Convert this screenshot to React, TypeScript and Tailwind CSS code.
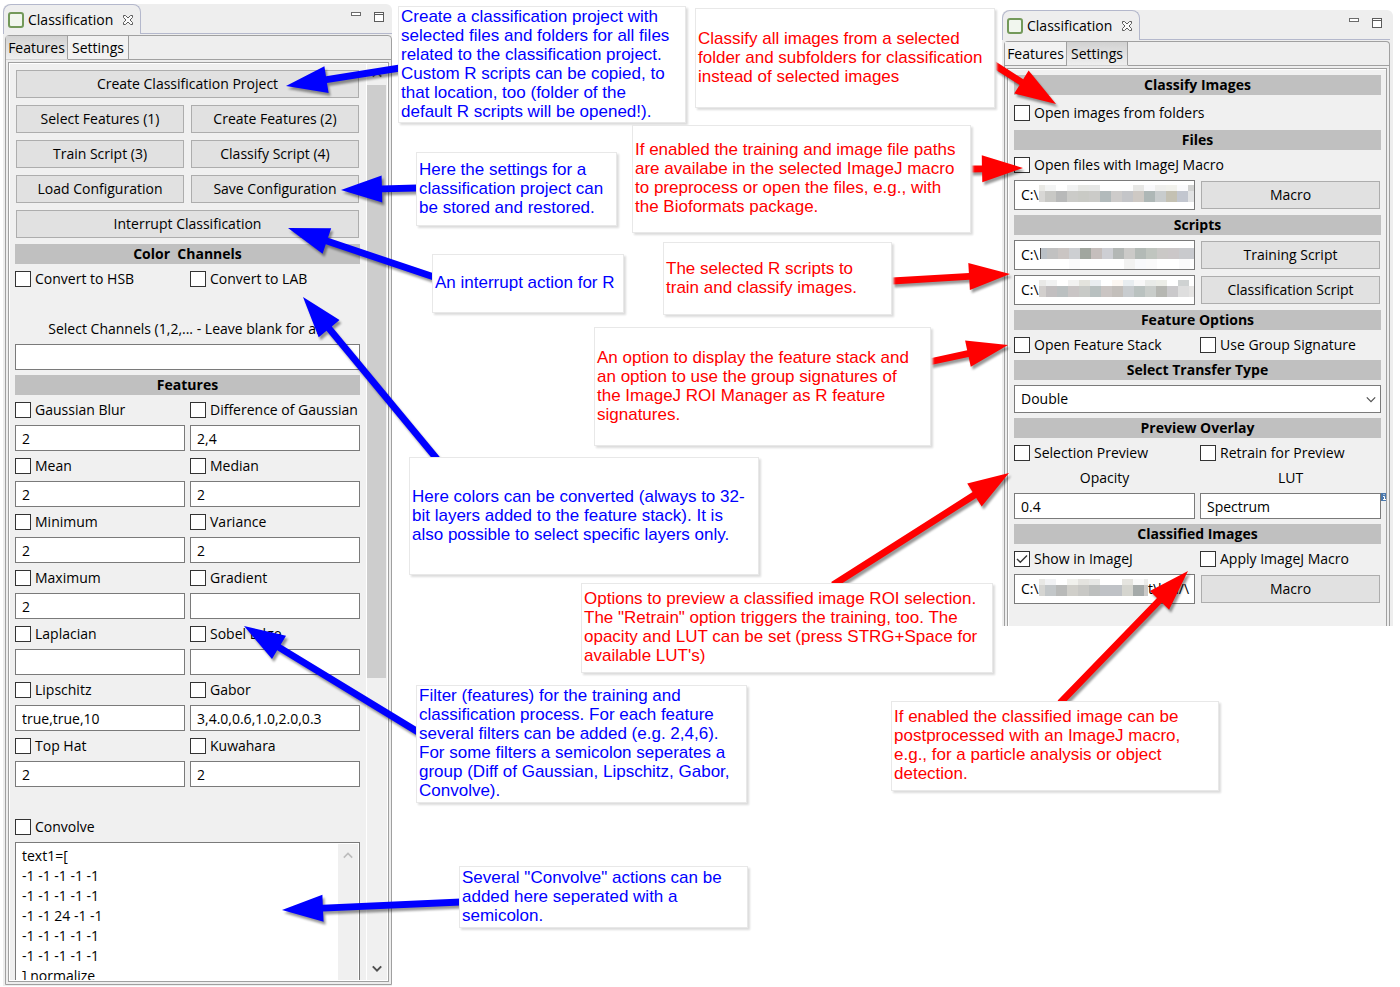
import React, { useState } from "react";

type Cell = [width: number, color: string];
type MosaicRow = { y: number; h: number; cells: Cell[] };

function CloseIcon() {
  return (
    <svg width="12" height="12" viewBox="0 0 12 12" fill="#fbfbfb" stroke="#5c5c5c" strokeWidth="1" aria-hidden="true">
      <path d="M1.5 1.5 H3.5 L6 4 L8.5 1.5 H10.5 V3.5 L8 6 L10.5 8.5 V10.5 H8.5 L6 8 L3.5 10.5 H1.5 V8.5 L4 6 L1.5 3.5 Z" />
    </svg>
  );
}

function MinimizeIcon() {
  return (
    <svg width="10" height="4" viewBox="0 0 10 4" aria-hidden="true">
      <rect x="0.5" y="0.5" width="9" height="3" fill="#fff" stroke="#6b6b6b" />
    </svg>
  );
}

function MaximizeIcon() {
  return (
    <svg width="10" height="10" viewBox="0 0 10 10" aria-hidden="true">
      <rect x="0.5" y="0.5" width="9" height="9" fill="#fff" stroke="#5c5c5c" />
      <path d="M0 2.5 H10" stroke="#5c5c5c" />
    </svg>
  );
}

function Chevron({ up = false, color, stroke = 1.6 }: { up?: boolean; color: string; stroke?: number }) {
  return (
    <svg width="10" height="7" viewBox="0 0 10 7" fill="none" stroke={color} strokeWidth={stroke} aria-hidden="true">
      <path d={up ? "M0.8 5.6 L5 1.4 L9.2 5.6" : "M0.8 1.4 L5 5.6 L9.2 1.4"} />
    </svg>
  );
}

function Window({
  active,
  bottomEdge,
  className,
  children,
}: {
  active: "Features" | "Settings";
  bottomEdge: boolean;
  className: string;
  children: React.ReactNode;
}) {
  const selected = "bg-linear-to-b from-[#d2d2d2] to-[#efefef] border-b-transparent";
  const idle = "bg-[#f2f2f2] border-b-[#a0a0a0]";
  return (
    <section className={"flex flex-col bg-[#eeeeee] rounded-t-md " + className}>
      <header className="flex h-[30px] shrink-0 items-stretch">
        <div className="flex w-[138px] items-center gap-1 rounded-t-lg border border-b-0 border-[#b4b8cc] pl-1">
          <span className="size-4 rounded-[3px] border-2 border-[#73995a] bg-[#f1f6ee]" />
          <span className="w-[90px]">Classification</span>
          <button type="button" aria-label="Close" className="flex">
            <CloseIcon />
          </button>
        </div>
        <div className="flex flex-1 items-start justify-end gap-[13px] border-b border-[#b4b8cc] pr-2 pt-2">
          <button type="button" aria-label="Minimize" className="flex">
            <MinimizeIcon />
          </button>
          <button type="button" aria-label="Maximize" className="flex">
            <MaximizeIcon />
          </button>
        </div>
      </header>
      <div
        className={
          "mt-px ml-[2px] flex min-h-0 flex-1 flex-col rounded-t border border-[#a0a0a0] " +
          (bottomEdge ? "mb-px" : "border-b-0")
        }
      >
        <nav className="flex h-6 shrink-0" role="tablist">
          <button
            type="button"
            role="tab"
            aria-selected={active === "Features"}
            className={"w-[62px] border-r border-b border-r-[#a0a0a0] " + (active === "Features" ? selected : idle)}
          >
            Features
          </button>
          <button
            type="button"
            role="tab"
            aria-selected={active === "Settings"}
            className={"w-[61px] border-r border-b border-r-[#a0a0a0] " + (active === "Settings" ? selected : idle)}
          >
            Settings
          </button>
          <div className="flex-1 border-b border-[#a0a0a0]" />
        </nav>
        <div
          className={
            "mx-[2px] mt-[2px] flex min-h-0 flex-1 border border-[#a0a0a0] bg-white pt-px pl-px " +
            (bottomEdge ? "mb-[2px] pb-px pr-px" : "border-b-0")
          }
        >
          {children}
        </div>
      </div>
    </section>
  );
}

function Bar({ children }: { children: React.ReactNode }) {
  return <h2 className="col-span-2 h-5 whitespace-pre bg-[#c0c0c0] text-center font-bold">{children}</h2>;
}

function PushButton({ children, wide = false }: { children: React.ReactNode; wide?: boolean }) {
  return (
    <button
      type="button"
      className={
        "m-px h-7 self-center border border-[#adadad] bg-[#e1e1e1] text-center " + (wide ? "col-span-2" : "")
      }
    >
      {children}
    </button>
  );
}

function Check({
  label,
  initial = false,
  className = "h-5",
}: {
  label: string;
  initial?: boolean;
  className?: string;
}) {
  const [on, setOn] = useState(initial);
  return (
    <label className={"flex items-center gap-1 whitespace-nowrap " + className}>
      <span className="grid size-4 shrink-0">
        <input
          type="checkbox"
          checked={on}
          onChange={(e) => setOn(e.target.checked)}
          className="col-start-1 row-start-1 size-4 appearance-none border border-[#333333] bg-white"
        />
        {on && (
          <svg
            viewBox="0 0 16 16"
            className="pointer-events-none col-start-1 row-start-1 size-4"
            fill="none"
            stroke="#333"
            strokeWidth="1.4"
            aria-hidden="true"
          >
            <path d="M3 8 L6.3 11.3 L13 4.5" />
          </svg>
        )}
      </span>
      <span>{label}</span>
    </label>
  );
}

function Field({ label, value, wide = false }: { label: string; value: string; wide?: boolean }) {
  return (
    <input
      type="text"
      aria-label={label}
      defaultValue={value}
      className={
        "h-[26px] w-full min-w-0 border border-[#7a7a7a] bg-white px-[6px] " + (wide ? "col-span-2" : "")
      }
    />
  );
}

function Mosaic({ width, rows }: { width: number; rows: MosaicRow[] }) {
  return (
    <svg width={width} height="28" viewBox={`0 0 ${width} 28`} className="shrink-0" shapeRendering="crispEdges" aria-hidden="true">
      {rows.map((row, r) => {
        let x = 0;
        return row.cells.map(([w, color], i) => {
          const cell = <rect key={`${r}-${i}`} x={x} y={row.y} width={w} height={row.h} fill={color} />;
          x += w;
          return cell;
        });
      })}
    </svg>
  );
}

function PathField({
  label,
  width,
  rows,
  tail,
}: {
  label: string;
  width: number;
  rows: MosaicRow[];
  tail?: string;
}) {
  return (
    <div className="flex h-[30px] min-w-0 items-start overflow-hidden border border-[#7a7a7a] bg-white">
      <input type="text" aria-label={label} defaultValue={"C:\\"} className="h-[26px] w-6 shrink-0 pl-[6px]" />
      <Mosaic width={width} rows={rows} />
      {tail && (
        <input type="text" aria-label={label + " ending"} defaultValue={tail} className="h-[26px] w-11 min-w-0" />
      )}
    </div>
  );
}

const macroPath: MosaicRow[] = [
  {
    y: 4,
    h: 6,
    cells: [[6, "#e9e9e5"], [11, "#f3f4f4"], [11, "#ffffff"], [11, "#f1f2f2"], [11, "#e6e7e4"], [11, "#e6e7e6"], [11, "#fdfdfd"], [11, "#fdfdfd"], [11, "#fdfdfd"], [11, "#e7e7e5"], [11, "#f9f9fb"], [11, "#efefed"], [11, "#f1f1ec"], [11, "#fafafc"], [11, "#d1d2d1"]],
  },
  {
    y: 10,
    h: 11,
    cells: [[6, "#d8d7d5"], [11, "#c8c8c5"], [11, "#b8b9b9"], [11, "#cbcbc8"], [11, "#c9cac5"], [11, "#cbcbc8"], [11, "#b2babb"], [11, "#cdcbca"], [11, "#c4c5c8"], [11, "#cec9c4"], [11, "#aeb7b6"], [11, "#c8cccd"], [11, "#c4c1b3"], [11, "#c2c6cf"], [11, "#e2e3e4"], [4, "#d9d9d9"]],
  },
];

const trainingPath: MosaicRow[] = [
  {
    y: 7,
    h: 11,
    cells: [[1, "#ffffff"], [1, "#4a4545"], [6, "#bac0c6"], [11, "#c1c1c1"], [11, "#cac5c3"], [11, "#cdcfd2"], [11, "#a1a69f"], [11, "#c5bebc"], [11, "#cdced3"], [11, "#b3b7b5"], [11, "#cbcac8"], [11, "#b3bab6"], [11, "#c0c5bf"], [11, "#cac8c6"], [11, "#cbc7c8"], [11, "#c9cacd"], [9, "#c8cacf"]],
  },
  {
    y: 18,
    h: 10,
    cells: [[30, "#ffffff"], [11, "#fafafb"], [44, "#ffffff"], [11, "#f2f2f1"], [11, "#f8f9fb"], [11, "#fafafa"], [22, "#ffffff"], [11, "#fafafb"]],
  },
];

const classifyPath: MosaicRow[] = [
  {
    y: 4,
    h: 6,
    cells: [[7, "#e9e9e7"], [11, "#f1f2f2"], [11, "#ffffff"], [11, "#f2f2f1"], [11, "#e3e3dd"], [11, "#e9edf0"], [11, "#ffffff"], [11, "#fcf7f2"], [11, "#e8edf0"], [11, "#f8f8f8"], [11, "#e9ebe8"], [11, "#ecede7"], [11, "#ffffff"], [11, "#cfd2d2"]],
  },
  {
    y: 10,
    h: 11,
    cells: [[7, "#d2cfcd"], [11, "#c2bfc0"], [11, "#bbc0c1"], [11, "#c9c5c5"], [11, "#c8cac7"], [11, "#b8c0c0"], [11, "#cac5c3"], [11, "#c3bfbb"], [11, "#c8cccf"], [11, "#bac2c0"], [11, "#c9cdca"], [11, "#b6b7b2"], [11, "#cac9cb"], [11, "#dedede"], [5, "#e5e4e3"]],
  },
];

const outputPath: MosaicRow[] = [
  {
    y: 4,
    h: 6,
    cells: [[6, "#e8e8e5"], [11, "#f1f2f4"], [11, "#ffffff"], [11, "#f1f1ed"], [11, "#e4e3df"], [11, "#e7e7e5"], [11, "#fefefe"], [11, "#fefefe"], [11, "#e5e4df"], [11, "#f9f9f9"], [4, "#ececea"]],
  },
  {
    y: 10,
    h: 11,
    cells: [[6, "#d5d5d2"], [11, "#c3c7c9"], [11, "#b9bab9"], [11, "#d0cfca"], [11, "#c8c8c5"], [11, "#bdbfbe"], [11, "#bfc2c6"], [11, "#bfc2c6"], [11, "#d5d5cf"], [11, "#a5aaa9"], [4, "#cbcac8"]],
  },
];

const features: [string, string][] = [
  ["Gaussian Blur", "2"],
  ["Difference of Gaussian", "2,4"],
  ["Mean", "2"],
  ["Median", "2"],
  ["Minimum", "2"],
  ["Variance", "2"],
  ["Maximum", "2"],
  ["Gradient", ""],
  ["Laplacian", ""],
  ["Sobel Edge", ""],
  ["Lipschitz", "true,true,10"],
  ["Gabor", "3,4.0,0.6,1.0,2.0,0.3"],
  ["Top Hat", "2"],
  ["Kuwahara", "2"],
];

const kernel = `text1=[
-1 -1 -1 -1 -1
-1 -1 -1 -1 -1
-1 -1 24 -1 -1
-1 -1 -1 -1 -1
-1 -1 -1 -1 -1
] normalize`;

function FeaturesPanel() {
  return (
    <>
      <div className="min-h-0 flex-1 overflow-hidden bg-[#f0f0f0] pt-[5px] pr-[6px] pl-[5px]">
        <div className="grid grid-cols-2 gap-[5px]">
          <PushButton wide>Create Classification Project</PushButton>
          <PushButton>Select Features (1)</PushButton>
          <PushButton>Create Features (2)</PushButton>
          <PushButton>Train Script (3)</PushButton>
          <PushButton>Classify Script (4)</PushButton>
          <PushButton>Load Configuration</PushButton>
          <PushButton>Save Configuration</PushButton>
          <PushButton wide>Interrupt Classification</PushButton>
          <Bar>{"Color  Channels"}</Bar>
          <Check label="Convert to HSB" />
          <Check label="Convert to LAB" />
          <div className="col-span-2 h-5" />
          <p className="col-span-2 h-5 whitespace-pre text-center">{"Select Channels (1,2,... - Leave blank for all "}</p>
          <Field label="Select Channels" value="" wide />
          <Bar>Features</Bar>
          {features.map(([name, value], i) => {
            // Each pair of features shares a row of check boxes and a row of values.
            if (i % 2 === 1) return null;
            const [rightName, rightValue] = features[i + 1];
            return (
              <React.Fragment key={name}>
                <Check label={name} />
                <Check label={rightName} />
                <Field label={name} value={value} />
                <Field label={rightName} value={rightValue} />
              </React.Fragment>
            );
          })}
          <div className="col-span-2 h-5" />
          <div className="col-span-2">
            <Check label="Convolve" />
          </div>
          <div className="col-span-2 flex border border-[#7a7a7a] bg-white p-px">
            <textarea
              aria-label="Convolve"
              defaultValue={kernel}
              className="h-[160px] min-w-0 flex-1 resize-none overflow-hidden px-[5px] pt-[2px] leading-5"
            />
            <div className="flex w-5 justify-center bg-[#f0f0f0] pt-2">
              <Chevron up color="#bdbdbd" />
            </div>
          </div>
        </div>
      </div>
      <div className="ml-px flex w-5 shrink-0 flex-col items-center bg-[#f0f0f0] pr-px">
        <div className="flex h-[21px] items-center">
          <Chevron up color="#606060" stroke={2} />
        </div>
        <div className="h-[593px] w-full shrink bg-[#cdcdcd]" />
        <div className="flex flex-1 items-end pb-2">
          <Chevron color="#505050" stroke={2} />
        </div>
      </div>
    </>
  );
}

function SettingsPanel() {
  return (
    <div className="flex-1 bg-[#f0f0f0] px-[5px] pt-[5px] pb-[22px]">
      <div className="grid grid-cols-2 gap-[5px]">
        <Bar>Classify Images</Bar>
        <Check label="Open images from folders" className="col-span-2 h-[25px]" />
        <Bar>Files</Bar>
        <Check label="Open files with ImageJ Macro" className="col-span-2 h-5" />
        <PathField label="Macro path" width={155} rows={macroPath} />
        <PushButton>Macro</PushButton>
        <Bar>Scripts</Bar>
        <PathField label="Training script path" width={155} rows={trainingPath} />
        <PushButton>Training Script</PushButton>
        <PathField label="Classification script path" width={155} rows={classifyPath} />
        <PushButton>Classification Script</PushButton>
        <Bar>Feature Options</Bar>
        <Check label="Open Feature Stack" />
        <Check label="Use Group Signature" />
        <Bar>Select Transfer Type</Bar>
        <div className="col-span-2 grid">
          <select
            aria-label="Select Transfer Type"
            defaultValue="Double"
            className="col-start-1 row-start-1 h-7 w-full appearance-none border border-[#7a7a7a] bg-white px-[6px]"
          >
            <option>Double</option>
          </select>
          <span className="pointer-events-none col-start-1 row-start-1 self-center justify-self-end pr-[5px]">
            <Chevron color="#505050" stroke={1.2} />
          </span>
        </div>
        <Bar>Preview Overlay</Bar>
        <Check label="Selection Preview" />
        <Check label="Retrain for Preview" />
        <p className="h-5 text-center">Opacity</p>
        <p className="h-5 text-center">LUT</p>
        <Field label="Opacity" value="0.4" />
        <div className="relative">
          <Field label="LUT" value="Spectrum" />
          <svg className="absolute top-0 left-full" width="5" height="8" viewBox="0 0 5 8" aria-hidden="true">
            <rect width="5" height="8" fill="#4a78ad" />
            <path d="M3 1 V2 M2 3.5 H3.5 V6.5 M2 6.5 H5" stroke="#fff" fill="none" />
          </svg>
        </div>
        <Bar>Classified Images</Bar>
        <Check label="Show in ImageJ" initial />
        <Check label="Apply ImageJ Macro" />
        <PathField label="Output path" width={109} rows={outputPath} tail={"t\\bin/\\"} />
        <PushButton>Macro</PushButton>
      </div>
    </div>
  );
}

type Arrow = { from: [number, number]; to: [number, number]; color: string };

const BLUE = "#0000ff";
const RED = "#ff0000";

const arrows: Arrow[] = [
  { from: [400, 68], to: [286, 86], color: BLUE },
  { from: [417, 188], to: [341, 190], color: BLUE },
  { from: [434, 277], to: [288, 228], color: BLUE },
  { from: [437, 459], to: [303, 297], color: BLUE },
  { from: [418, 732], to: [244, 626], color: BLUE },
  { from: [461, 902], to: [282, 910], color: BLUE },
  { from: [993, 64], to: [1056, 104], color: RED },
  { from: [969, 169], to: [1023, 168], color: RED },
  { from: [892, 281], to: [1010, 274], color: RED },
  { from: [929, 362], to: [1008, 345], color: RED },
  { from: [833, 585], to: [1009, 473], color: RED },
  { from: [1060, 703], to: [1188, 571], color: RED },
];

function arrowPoints({ from, to }: Arrow) {
  const dx = to[0] - from[0];
  const dy = to[1] - from[1];
  const len = Math.hypot(dx, dy);
  const [ux, uy] = [dx / len, dy / len];
  const at = (along: number, side: number) =>
    `${(from[0] + ux * along - uy * side).toFixed(1)},${(from[1] + uy * along + ux * side).toFixed(1)}`;
  const neck = len - 41;
  return [
    at(0, 3.4),
    at(neck, 3.4),
    at(neck, 13.5),
    at(len, 0),
    at(neck, -13.5),
    at(neck, -3.4),
    at(0, -3.4),
  ].join(" ");
}

function Note({ className, text }: { className: string; text: string }) {
  return (
    <p
      className={
        "absolute flex items-center whitespace-pre border border-[#e8e8e8] bg-white pb-[2px] pl-[2px] font-['Liberation_Sans',Arial,sans-serif] text-[17px] leading-[19px] shadow-[2px_2px_2px_#dcdcdc] " +
        className
      }
    >
      {text}
    </p>
  );
}

function Annotations() {
  return (
    <>
      <svg
        className="pointer-events-none absolute top-0 left-0 drop-shadow-[2px_3px_1px_rgba(0,0,0,0.4)]"
        width="1400"
        height="987"
        viewBox="0 0 1400 987"
        aria-hidden="true"
      >
        {arrows.map((a) => (
          <polygon key={a.to.join()} points={arrowPoints(a)} fill={a.color} />
        ))}
      </svg>
      <Note
        className="top-[6px] left-[398px] h-[117px] w-[288px] text-[#0000ff]"
        text={
          "Create a classification project with\nselected files and folders for all files\nrelated to the classification project.\nCustom R scripts can be copied, to\nthat location, too (folder of the\ndefault R scripts will be opened!)."
        }
      />
      <Note
        className="top-[8px] left-[695px] h-[100px] w-[300px] text-[#ff0000]"
        text={"Classify all images from a selected\nfolder and subfolders for classification\ninstead of selected images"}
      />
      <Note
        className="top-[152px] left-[416px] h-[74px] w-[201px] text-[#0000ff]"
        text={"Here the settings for a\nclassification project can\nbe stored and restored."}
      />
      <Note
        className="top-[125px] left-[632px] h-[108px] w-[339px] text-[#ff0000]"
        text={
          "If enabled the training and image file paths\nare availabe in the selected ImageJ macro\nto preprocess or open the files, e.g., with\nthe Bioformats package."
        }
      />
      <Note className="top-[254px] left-[432px] h-[59px] w-[192px] text-[#0000ff]" text="An interrupt action for R" />
      <Note
        className="top-[242px] left-[663px] h-[73px] w-[229px] text-[#ff0000]"
        text={"The selected R scripts to\ntrain and classify images."}
      />
      <Note
        className="top-[327px] left-[594px] h-[119px] w-[337px] text-[#ff0000]"
        text={
          "An option to display the feature stack and\nan option to use the group signatures of\nthe ImageJ ROI Manager as R feature\nsignatures."
        }
      />
      <Note
        className="top-[457px] left-[409px] h-[118px] w-[350px] text-[#0000ff]"
        text={
          "Here colors can be converted (always to 32-\nbit layers added to the feature stack). It is\nalso possible to select specific layers only."
        }
      />
      <Note
        className="top-[583px] left-[581px] h-[90px] w-[412px] text-[#ff0000]"
        text={
          'Options to preview a classified image ROI selection.\nThe "Retrain" option triggers the training, too. The\nopacity and LUT can be set (press STRG+Space for\navailable LUT\'s)'
        }
      />
      <Note
        className="top-[685px] left-[416px] h-[118px] w-[331px] text-[#0000ff]"
        text={
          "Filter (features) for the training and\nclassification process. For each feature\nseveral filters can be added (e.g. 2,4,6).\nFor some filters a semicolon seperates a\ngroup (Diff of Gaussian, Lipschitz, Gabor,\nConvolve)."
        }
      />
      <Note
        className="top-[701px] left-[891px] h-[90px] w-[328px] text-[#ff0000]"
        text={
          "If enabled the classified image can be\npostprocessed with an ImageJ macro,\ne.g., for a particle analysis or object\ndetection."
        }
      />
      <Note
        className="top-[866px] left-[459px] h-[62px] w-[289px] text-[#0000ff]"
        text={'Several "Convolve" actions can be\nadded here seperated with a\nsemicolon.'}
      />
    </>
  );
}

export default function App() {
  return (
    <main className="relative flex h-screen items-start justify-between overflow-hidden bg-white pt-1 pr-[7px] pb-px pl-[3px] font-['Open_Sans','Noto_Sans',sans-serif] text-[14px] leading-5 text-black">
      <Window active="Features" bottomEdge className="h-full w-[389px]">
        <FeaturesPanel />
      </Window>
      <Window active="Settings" bottomEdge={false} className="mt-[6px] w-[391px] pr-[3px]">
        <SettingsPanel />
      </Window>
      <Annotations />
    </main>
  );
}
